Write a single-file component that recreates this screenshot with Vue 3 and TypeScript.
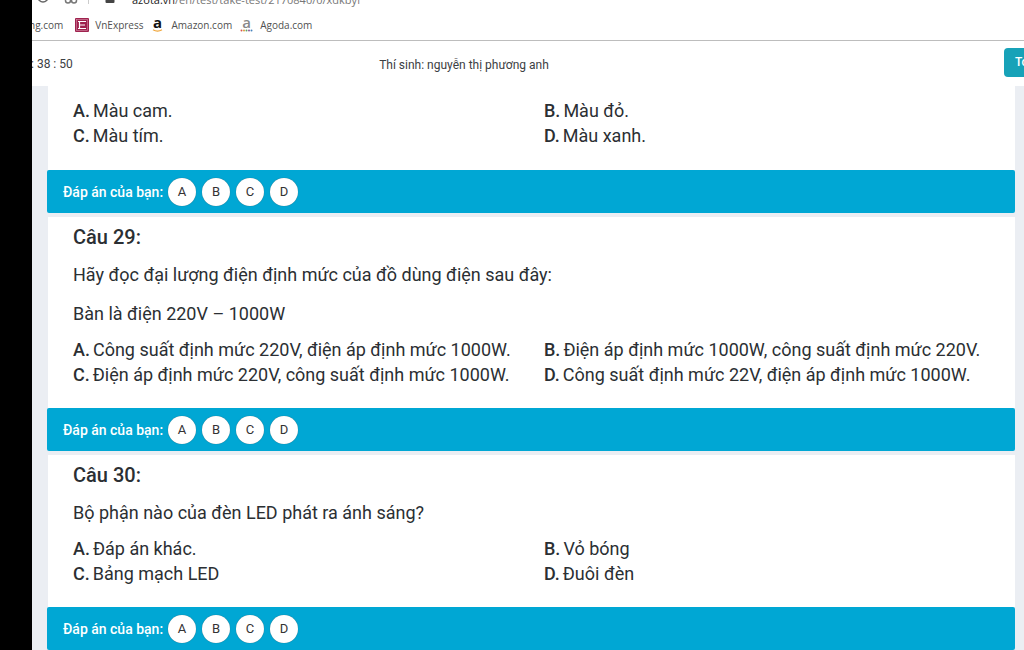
<script setup lang="ts">
import { ref } from 'vue'

interface Option {
  key: string
  text: string
}

interface Question {
  id: number
  title?: string
  body: string[]
  options: Option[]
}

const letters = ['A', 'B', 'C', 'D']

const questions: Question[] = [
  {
    id: 28,
    body: [],
    options: [
      { key: 'A', text: 'Màu cam.' },
      { key: 'B', text: 'Màu đỏ.' },
      { key: 'C', text: 'Màu tím.' },
      { key: 'D', text: 'Màu xanh.' },
    ],
  },
  {
    id: 29,
    title: 'Câu 29:',
    body: ['Hãy đọc đại lượng điện định mức của đồ dùng điện sau đây:', 'Bàn là điện 220V – 1000W'],
    options: [
      { key: 'A', text: 'Công suất định mức 220V, điện áp định mức 1000W.' },
      { key: 'B', text: 'Điện áp định mức 1000W, công suất định mức 220V.' },
      { key: 'C', text: 'Điện áp định mức 220V, công suất định mức 1000W.' },
      { key: 'D', text: 'Công suất định mức 22V, điện áp định mức 1000W.' },
    ],
  },
  {
    id: 30,
    title: 'Câu 30:',
    body: ['Bộ phận nào của đèn LED phát ra ánh sáng?'],
    options: [
      { key: 'A', text: 'Đáp án khác.' },
      { key: 'B', text: 'Vỏ bóng' },
      { key: 'C', text: 'Bảng mạch LED' },
      { key: 'D', text: 'Đuôi đèn' },
    ],
  },
]

const answers = ref<Record<number, string>>({})

function choose(id: number, letter: string) {
  answers.value[id] = letter
}
</script>

<template>
  <div class="screen">
    <div class="window">
      <div class="address">
        <svg class="reload" width="14" height="14" viewBox="0 0 14 14">
          <circle cx="7" cy="7" r="5" fill="none" stroke="#666" stroke-width="1.5" />
        </svg>
        <svg class="glasses" width="14" height="14" viewBox="0 0 14 14">
          <g fill="none" stroke="#777" stroke-width="1.5">
            <circle cx="4" cy="7.5" r="2.5" />
            <circle cx="10" cy="7.5" r="2.5" />
          </g>
        </svg>
        <span class="divider"></span>
        <svg class="lock" width="10" height="14" viewBox="0 0 10 14">
          <path d="M2.5 6V4a2.5 2.5 0 0 1 5 0v2" fill="none" stroke="#444" stroke-width="1.5" />
          <rect x="0.5" y="5.5" width="9" height="7.5" rx="1" fill="#444" />
        </svg>
        <span class="url"><span class="host">azota.vn</span>/en/test/take-test/2170840/0/xdkbyf</span>
      </div>

      <nav class="bookmarks">
        <a href="#" class="bookmark clipped">ng.com</a>
        <a href="#" class="bookmark">
          <svg width="14" height="14" viewBox="0 0 14 14">
            <rect width="14" height="14" rx="1" fill="#9f224e" />
            <rect x="1.5" y="1.5" width="11" height="11" fill="none" stroke="#d590a8" stroke-width="0.6" />
            <path d="M11 3.5H4.5v7H11M4.5 7H10M3 3.5h2M3 10.5h2" fill="none" stroke="#fff" stroke-width="1.2" />
          </svg>
          <span>VnExpress</span>
        </a>
        <a href="#" class="bookmark">
          <svg width="14" height="16" viewBox="0 0 14 16">
            <text x="5.5" y="11" text-anchor="middle" class="amazon-letter">a</text>
            <path d="M1 12.8q4.5 2.6 9 0" fill="none" stroke="#f0a63a" stroke-width="1.2" />
          </svg>
          <span>Amazon.com</span>
        </a>
        <a href="#" class="bookmark">
          <svg width="14" height="16" viewBox="0 0 14 16">
            <text x="6.5" y="11" text-anchor="middle" class="agoda-letter">a</text>
            <circle cx="1.5" cy="13.5" r="1" fill="#d8554f" />
            <circle cx="4" cy="13.5" r="1" fill="#d9a13c" />
            <circle cx="6.5" cy="13.5" r="1" fill="#5f9f67" />
            <circle cx="9" cy="13.5" r="1" fill="#8b5a9c" />
            <circle cx="11.5" cy="13.5" r="1" fill="#4683bd" />
          </svg>
          <span>Agoda.com</span>
        </a>
      </nav>

      <header class="exam-header">
        <span class="timer">: 38 : 50</span>
        <span class="student">Thí sinh: nguyễn thị phương anh</span>
        <div class="actions"><button type="button" class="tool">To</button></div>
      </header>

      <main class="questions">
        <section v-for="q in questions" :key="q.id" class="question">
          <div class="content">
            <h2 v-if="q.title" class="title">{{ q.title }}</h2>
            <p v-for="line in q.body" :key="line" class="text">{{ line }}</p>
            <div class="options">
              <div v-for="o in q.options" :key="o.key" class="option"><b>{{ o.key }}.</b><span>{{ o.text }}</span></div>
            </div>
          </div>
          <div class="answer-bar">
            <span :id="'answer-' + q.id" class="answer-label">Đáp án của bạn:</span>
            <div class="choices" role="group" :aria-labelledby="'answer-' + q.id">
              <button
                v-for="l in letters"
                :key="l"
                type="button"
                class="choice"
                :class="{ chosen: answers[q.id] === l }"
                :aria-pressed="answers[q.id] === l"
                @click="choose(q.id, l)"
              >{{ l }}</button>
            </div>
          </div>
        </section>
      </main>
    </div>
  </div>
</template>

<style>
body {
  margin: 0;
  background: #000;
}
</style>

<style scoped>
.screen {
  box-sizing: border-box;
  height: 100vh;
  padding-left: 32px;
  overflow: hidden;
  background: #000;
  color: #2b2f33;
  font-family: Roboto, "Liberation Sans", sans-serif;
}
.window {
  display: flex;
  flex-direction: column;
  height: 100%;
  overflow: hidden;
  background: #fff;
}
.address {
  display: flex;
  flex: none;
  align-items: flex-end;
  height: 7px;
  padding-left: 4px;
  overflow: hidden;
  color: #777;
  font: 11px/15px "Open Sans", "Noto Sans", sans-serif;
}
.address svg {
  flex: none;
}
.reload {
  margin-bottom: 3px;
}
.glasses {
  margin: 0 10px 0 14px;
}
.divider {
  height: 16px;
  margin-bottom: 3px;
  border-left: 1px solid #ccc;
}
.lock {
  margin: 0 17px 3px 16px;
}
.host {
  color: #222;
}
.bookmarks {
  display: flex;
  flex: none;
  align-items: center;
  gap: 8px;
  box-sizing: border-box;
  height: 34px;
  padding-top: 3px;
  overflow: hidden;
  border-bottom: 1px solid #bdbdbd;
  font: 10px/16px "Open Sans", "Noto Sans", sans-serif;
}
.bookmark {
  display: flex;
  align-items: center;
  gap: 6px;
  color: #505050;
  text-decoration: none;
  white-space: nowrap;
}
.bookmark.clipped {
  margin: 0 4px 0 -3px;
}
.amazon-letter,
.agoda-letter {
  font: bold 15px "Open Sans", sans-serif;
  fill: #111;
}
.agoda-letter {
  font-weight: 600;
  fill: #888;
}
.exam-header {
  display: grid;
  flex: none;
  grid-template-columns: 1fr auto 1fr;
  align-items: center;
  height: 45px;
  overflow: hidden;
  color: #3c4043;
  font-size: 12px;
  line-height: 16px;
}
.timer {
  margin-left: -1px;
}
.student {
  padding-top: 2px;
  margin-right: 128px;
}
.actions {
  display: flex;
  justify-content: flex-end;
  padding-bottom: 3px;
}
.tool {
  width: 32px;
  height: 29px;
  margin-right: -12px;
  padding: 0 0 0 11px;
  border: 0;
  border-radius: 4px;
  background: #17a2b8;
  color: #fff;
  font: 500 12px/16px Roboto, sans-serif;
  text-align: left;
}
.questions {
  display: flex;
  flex: 1;
  flex-direction: column;
  gap: 4px;
  min-height: 0;
  padding: 0 9px 0 15px;
  overflow: hidden;
  background: #ebeef3;
}
.question {
  flex: none;
}
.content {
  margin-left: 1px;
  padding: 8px 0 21px 25px;
  background: #fff;
}
.question:first-child .content {
  padding: 1px 0 22px 25px;
}
.title {
  margin: 0 0 13px;
  font-size: 20px;
  font-weight: 500;
  line-height: 24px;
}
.text {
  margin: 0;
  font-size: 18px;
  line-height: 25px;
}
.text + .text {
  margin-top: 14px;
}
.options {
  display: grid;
  grid-template-columns: 1fr 1fr;
  margin-top: 11px;
  font-size: 18px;
  line-height: 25px;
}
.option {
  display: flex;
  gap: 3px;
}
.option b {
  font-weight: 500;
}
.answer-bar {
  display: flex;
  align-items: center;
  gap: 5px;
  height: 43px;
  padding-left: 16px;
  border-radius: 2px;
  background: #00a7d4;
}
.answer-label {
  color: #fff;
  font-size: 14px;
  font-weight: 500;
  line-height: 16px;
}
.choices {
  display: flex;
  gap: 6px;
}
.choice {
  width: 28px;
  height: 28px;
  padding: 0;
  border: 0;
  border-radius: 50%;
  background: #fff;
  box-shadow: 0 0 1px #35606c;
  color: #333;
  font: 13px/16px Roboto, sans-serif;
  cursor: pointer;
}
.choice.chosen {
  background: #ffc107;
}
</style>
